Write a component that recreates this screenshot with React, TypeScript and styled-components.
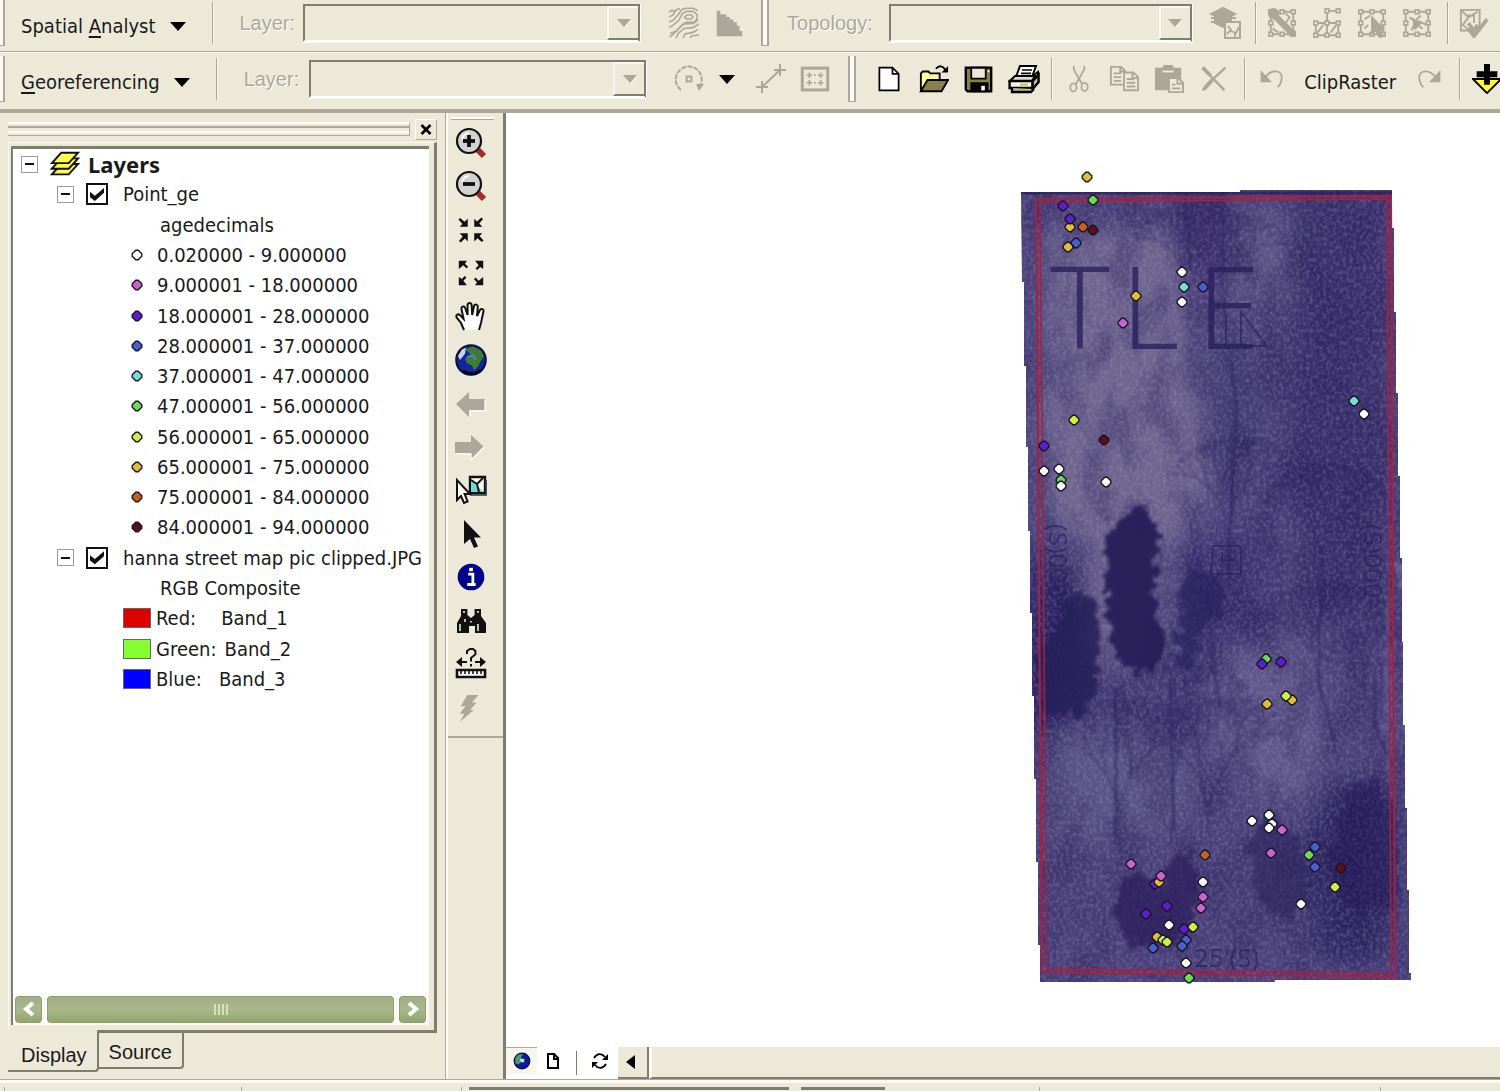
import React from "react";
import styled, { createGlobalStyle, css } from "styled-components";

const face = "#ece9d8";
const shade = "#aca899";
const dark = "#7f7c70";
const light = "#ffffff";
const uiFont = `"DejaVu Sans Condensed", "DejaVu Sans", sans-serif`;
const plainFont = `"Liberation Sans", Arial, sans-serif`;

const GlobalStyle = createGlobalStyle`
  *, *::before, *::after { box-sizing: border-box; }
  body { margin: 0; background: ${face}; }
  button, select, input { font: inherit; color: inherit; margin: 0; }
`;

const Page = styled.div`
  display: flex;
  flex-direction: column;
  height: 100vh;
  overflow: hidden;
  background: ${face};
  color: #1a1a1a;
  font-family: ${uiFont};
  font-size: 20px;
  line-height: 24px;
`;

/* ---------- toolbars ---------- */

const ToolbarRow = styled.div<{ $last?: boolean }>`
  display: flex;
  flex: none;
  align-items: flex-start;
  overflow: hidden;
  height: ${(p) => (p.$last ? 61 : 52)}px;
  padding-top: ${(p) => (p.$last ? 4 : 0)}px;
  border-bottom: ${(p) => (p.$last ? `4px solid ${shade}` : `1px solid ${shade}`)};
  box-shadow: ${(p) => (p.$last ? `inset 0 1px 0 #f8f7ef` : "none")};
`;

const Bar = styled.div`
  display: flex;
  flex: none;
  align-items: center;
  height: 46px;
`;

const Grip = styled.span<{ $edge?: boolean }>`
  flex: none;
  width: ${(p) => (p.$edge ? 8 : 5)}px;
  height: 46px;
  background: #fbfaf4;
  border-right: 2px solid ${shade};
  border-bottom: 1px solid ${shade};
  border-left: ${(p) => (p.$edge ? `2px solid ${shade}` : "none")};
`;

const Separator = styled.span`
  flex: none;
  width: 2px;
  height: 42px;
  border-left: 1px solid ${shade};
  border-right: 1px solid #f8f7ef;
`;

const MenuButton = styled.button`
  display: flex;
  align-items: center;
  gap: 14px;
  height: 46px;
  padding: 6px 0 0 16px;
  border: 0;
  background: none;
  white-space: nowrap;
`;

const Accel = styled.span`
  text-decoration: underline;
  text-decoration-thickness: 2px;
  text-underline-offset: 3px;
`;

const Push = styled.span<{ $w: number }>`
  flex: none;
  width: ${(p) => p.$w}px;
`;

const FieldLabel = styled.label`
  font-family: ${plainFont};
  color: ${shade};
  text-shadow: 1px 1px 0 ${light};
  white-space: nowrap;
`;

const Combo = styled.div<{ $w: number }>`
  display: flex;
  flex: none;
  width: ${(p) => p.$w}px;
  height: 38px;
  border: 2px solid ${dark};
  border-bottom-color: ${light};
  box-shadow: 0 1px 0 ${light}, 1px 0 0 ${light};
`;

const ComboSelect = styled.select`
  flex: 1;
  min-width: 0;
  appearance: none;
  border: 0;
  background: ${face};
  opacity: 1;
`;

const ComboArrow = styled.span`
  display: flex;
  flex: none;
  align-items: center;
  justify-content: center;
  width: 31px;
  border-top: 2px solid #f8f7ef;
  border-left: 2px solid #f8f7ef;
  border-bottom: 2px solid ${dark};
`;

const IconButton = styled.button<{ $w?: number }>`
  display: flex;
  flex: none;
  align-items: center;
  justify-content: center;
  width: ${(p) => p.$w ?? 45}px;
  height: 42px;
  padding: 0;
  border: 0;
  background: none;
`;

const TextButton = styled.button`
  flex: none;
  height: 46px;
  padding: 6px 10px 0;
  border: 0;
  background: none;
`;

/* ---------- work area ---------- */

const Work = styled.div`
  display: flex;
  flex: 1;
  min-height: 0;
`;

const Dock = styled.aside`
  display: flex;
  flex: none;
  flex-direction: column;
  width: 446px;
  padding: 5px 8px 7px 8px;
  border-right: 1px solid ${shade};
`;

const DockHead = styled.div`
  display: flex;
  align-items: center;
  gap: 5px;
  height: 22px;
`;

const DockGrip = styled.div`
  flex: 1;
  height: 14px;
  border-top: 2px solid #fbfaf4;
  border-bottom: 1px solid ${shade};
  border-right: 1px solid ${shade};
  background: linear-gradient(${face} 2px, ${shade} 2px, ${shade} 4px, ${face} 4px, ${face} 7px, #fbfaf4 7px, #fbfaf4 9px, ${face} 9px);
`;

const CloseButton = styled.button`
  display: flex;
  align-items: center;
  justify-content: center;
  width: 22px;
  height: 21px;
  padding: 0;
  background: ${face};
  border: 1px solid ${light};
  border-right-color: ${shade};
  border-bottom-color: ${shade};
`;

const TabPage = styled.div`
  display: flex;
  flex: 1;
  flex-direction: column;
  min-height: 0;
  margin-top: 2px;
  padding: 3px 5px 5px 2px;
  border: 1px solid #fbfaf4;
  border-right: 3px solid ${dark};
  border-bottom: 3px solid ${dark};
`;

const TreeBox = styled.div`
  display: flex;
  flex: 1;
  flex-direction: column;
  min-height: 0;
  background: ${light};
  border-top: 3px solid ${dark};
  border-left: 2px solid ${dark};
`;

const Tree = styled.ul`
  display: grid;
  grid-auto-rows: 1fr;
  height: 545px;
  margin: 0 0 auto;
  padding: 0;
  list-style: none;
`;

const TreeRow = styled.li<{ $level: number }>`
  display: flex;
  align-items: center;
  min-width: 0;
  padding-left: ${(p) => [8, 44, 147, 118, 110][p.$level]}px;
  white-space: pre;
`;

const Expander = styled.button`
  display: flex;
  flex: none;
  align-items: center;
  justify-content: center;
  width: 17px;
  height: 17px;
  padding: 0;
  border: 1px solid #9a9a9a;
  background: ${light};
  &::before {
    content: "";
    width: 9px;
    height: 2px;
    background: #111;
  }
`;

const LayerTick = styled.label`
  display: flex;
  align-items: center;
  gap: 15px;
  margin-left: 12px;
`;

const Tick = styled.input`
  appearance: none;
  display: grid;
  place-items: center;
  width: 22px;
  height: 22px;
  border: 2px solid #111;
  background: ${light};
  &:checked::before {
    content: "";
    width: 14px;
    height: 13px;
    background: #111;
    clip-path: polygon(0 30%, 35% 60%, 100% 0, 100% 38%, 35% 100%, 0 72%);
  }
`;

const FrameName = styled.strong`
  margin-left: 8px;
  font-family: "Noto Sans", sans-serif;
  font-weight: 700;
  font-size: 22px;
`;

const ClassLabel = styled.span`
  margin-left: 14px;
`;

const Swatch = styled.span<{ $color: string }>`
  flex: none;
  width: 28px;
  height: 20px;
  margin-right: 5px;
  border: 1px solid #666;
  background: ${(p) => p.$color};
`;

const BandName = styled.span<{ $gap: number }>`
  margin-left: ${(p) => p.$gap}px;
`;

const ScrollBar = styled.div`
  display: flex;
  flex: none;
  align-items: center;
  gap: 5px;
  height: 32px;
  padding: 0 3px 0 2px;
  background: #fbfaf4;
`;

const olive = css`
  border: 1px solid #8f9f70;
  border-radius: 3px;
  background: linear-gradient(#a1ae86, #a9b88c 50%, #93a76c);
  outline: 1px solid #fff;
`;

const ScrollStep = styled.button`
  display: flex;
  align-items: center;
  justify-content: center;
  width: 27px;
  height: 27px;
  padding: 0;
  ${olive}
`;

const ScrollThumb = styled.div`
  display: flex;
  flex: 1;
  align-items: center;
  justify-content: center;
  gap: 2px;
  height: 27px;
  ${olive}
`;

const ThumbLine = styled.span`
  width: 2px;
  height: 11px;
  background: #d7e0bd;
`;

const Tabs = styled.div`
  display: flex;
  flex: none;
  align-items: flex-start;
  height: 39px;
`;

const Tab = styled.button<{ $active?: boolean }>`
  height: ${(p) => (p.$active ? 42 : 36)}px;
  padding: ${(p) => (p.$active ? "9px 10px 0 13px" : "4px 10px 0")};
  margin-top: ${(p) => (p.$active ? -3 : 0)}px;
  border: 0 solid ${dark};
  border-right-width: 2px;
  border-bottom-width: 2px;
  border-radius: 0 0 4px 0;
  background: ${face};
  font-family: ${plainFont};
  line-height: 24px;
`;

const ToolColumn = styled.div`
  display: flex;
  flex: none;
  flex-direction: column;
  width: 57px;
  border-left: 2px solid #fbfaf4;
`;

const ToolStrip = styled.div`
  display: flex;
  flex-direction: column;
  gap: 2px;
  height: 625px;
  padding: 4px 9px 0 0;
  border-bottom: 2px solid ${shade};
`;

const ToolGrip = styled.span`
  height: 3px;
  margin-left: 3px;
  background: #fbfaf4;
  border-bottom: 1px solid ${shade};
`;

const ToolGrid = styled.div`
  display: grid;
  grid-auto-rows: 1fr;
  justify-items: center;
  height: 608px;
`;

const MapPane = styled.main`
  display: flex;
  flex: 1;
  flex-direction: column;
  min-width: 0;
  background: #fefffe;
  border-left: 3px solid ${dark};
`;

const MapCanvas = styled.svg`
  display: block;
  flex: 1;
  width: 100%;
  min-height: 0;
`;

const MapFoot = styled.div`
  display: flex;
  flex: none;
  height: 32px;
`;

const ViewButton = styled.button<{ $pressed?: boolean }>`
  display: flex;
  align-items: center;
  justify-content: center;
  width: 31px;
  height: 27px;
  padding: 0;
  border: 0;
  border-top: 1px solid ${(p) => (p.$pressed ? shade : "transparent")};
  background: ${(p) => (p.$pressed ? "#f7f5ec" : "none")};
`;

const FootRule = styled.span`
  width: 1px;
  height: 24px;
  margin: 4px 7px 0 8px;
  background: ${dark};
`;

const ScrollLeft = styled.button`
  display: flex;
  align-items: center;
  justify-content: center;
  width: 31px;
  padding: 0 5px 0 0;
  background: ${face};
  border: 0 solid ${dark};
  border-right-width: 2px;
  border-bottom-width: 2px;
`;

const ScrollTrack = styled.div`
  flex: 1;
  background: ${face};
  border-left: 3px solid #fbfaf4;
  border-bottom: 2px solid ${dark};
`;

const Status = styled.footer`
  display: flex;
  flex: none;
  height: 12px;
  padding-top: 7px;
  border-top: 1px solid ${shade};
  box-shadow: inset 0 3px 0 #fbfaf4;
`;

const StatusCell = styled.span<{ $w: number; $sunk?: boolean }>`
  flex: none;
  width: ${(p) => p.$w}px;
  margin-right: ${(p) => (p.$sunk ? 12 : 0)}px;
  border-top: ${(p) => (p.$sunk ? `3px solid ${dark}` : "none")};
  border-right: ${(p) => (p.$sunk ? "none" : `1px solid ${shade}`)};
`;

/* ---------- icons ---------- */

type IconProps = { children: React.ReactNode; size?: number; color?: string };

const Icon = ({ children, size = 30, color = shade }: IconProps) => (
  <svg width={size} height={size} viewBox="0 0 16 16" fill="none" stroke={color} strokeWidth="1" aria-hidden="true">
    {children}
  </svg>
);

const Caret = ({ color = "#000" }: { color?: string }) => (
  <svg width="16" height="9" viewBox="0 0 16 9" aria-hidden="true">
    <path d="M0 0h16L8 9z" fill={color} />
  </svg>
);

const SmallCaret = () => (
  <svg width="14" height="8" viewBox="0 0 14 8" aria-hidden="true">
    <path d="M0 0h14L7 8z" fill={shade} />
    <path d="M8 8L14 1" stroke="#fff" />
  </svg>
);

const ContourIcon = () => (
  <Icon size={32}>
    <g strokeWidth=".8">
      <path d="M.5 2.500l1.500-.8 1.500.6M.5 5l2-1 1.500-2.500 2-.8M.5 7.500l2-.8L5 4l2-2.800 2-.6h3.500l2.500 1.200" />
      <path d="M.5 10.200l2-1 3-2.700 1.500-3 2-1.300h3.500l2 1.500v2.500l-1.500 1.500H9l-2 1.200-2.500 3-3.500 1.300" />
      <path d="M8.300 5l1.200-1h2.200l.8 1-.8 1H9.300zM.8 15l2-1.500 2.700-3 2.500-2 4.500-.3 2.500-1.700M4 15.500l1.300-2.500L8 10.700l4.500-.4 3-1.800M7.500 15.500l1-2 4-.8 2.500-1.500M11 15.500l.8-1 3.700-.5" />
    </g>
  </Icon>
);

const HistogramIcon = () => (
  <Icon size={28}>
    <path d="M1 1v14.500h14.500v-3h-1.500v-3h-1.500V7.500h-2V6h-2V4.500h-2V3H3V1z" fill={shade} stroke="none" />
  </Icon>
);

const TopoLayersIcon = () => (
  <Icon size={32}>
    <path d="M7 .5L1 3.500l6 3 6-3z" fill={shade} />
    <path d="M1 5.500h2M1 7.500h3M11 5.500h2.500M3 4h8v5l-4 1-4-2z" fill={shade} />
    <path d="M8 7.500h7.500V15.500H8z" fill={face} />
    <path d="M9 13.500l2-2-1.500-2M11 12l2.500 1 1.500-3M13 15v-2" strokeWidth=".9" />
  </Icon>
);

const nodes = (pts: number[][]) =>
  pts.map(([x, y]) => <rect key={`${x}-${y}`} x={x - 1} y={y - 1} width="2" height="2" fill={face} strokeWidth=".9" />);

const gridNodes = [[2, 2], [8, 2], [14, 2], [2, 8], [14, 8], [2, 14], [8, 14], [14, 14]];

const TopoEditIcon = () => (
  <Icon>
    <path d="M2 2h12v12H2zM10 3l2 2-2 3M3 11l3 2" />
    {nodes(gridNodes)}
    <circle cx="3.500" cy="3" r="2.500" fill={shade} />
    <path d="M4 4l9 9" strokeWidth="3.500" />
    <circle cx="13.500" cy="13.500" r="1.500" fill={shade} />
  </Icon>
);

const SharedFeatureIcon = () => (
  <Icon>
    <path d="M8 1.500h6M8 1.500V8M2 8h12v6.500H2zM8 8v6M3 13l3-4M10 13l3-4" />
    {nodes([[8, 1.500], [14, 1.500], [2, 8], [8, 8], [14, 8], [2, 14.500], [8, 14.500], [14, 14.500]])}
  </Icon>
);

const ValidateExtentIcon = () => (
  <Icon>
    <path d="M2 2h12v12H2zM4 6l3-2M4 11l2-2" />
    {nodes(gridNodes)}
    <path d="M8 5l6 6-2 .5 2 3.500-2 .5-2-3.500-2 1.500z" fill={shade} />
  </Icon>
);

const ValidateAllIcon = () => (
  <Icon>
    <path d="M2 2h12v12H2zM4 5l3 2 3-3M5 12l2-4 4 3M9 7l4 2" />
    {nodes(gridNodes)}
    <path d="M6 6l4 2-3 3z" fill={shade} />
  </Icon>
);

const ErrorInspectorIcon = () => (
  <Icon>
    <path d="M1 1h10v11H1zM1 1l4 4-3 4 5 4M5 5l5-3M4 4h4v4" />
    <path d="M5 11l3 4 7-9M5 8l3 4 2-3" strokeWidth="2" />
  </Icon>
);

const RotateIcon = () => (
  <Icon size={32}>
    <path d="M4 13.500A6.500 6.500 0 1 1 13.500 11.500" strokeDasharray="2.500 .6" />
    <path d="M11.500 10.500h4L13 14z" fill={shade} stroke="none" />
    <rect x="6.800" y="6.800" width="2.400" height="2.400" />
  </Icon>
);

const ControlPointIcon = () => (
  <Icon size={32}>
    <path d="M1 12h6M4 9v6M10 3.500h6M13 .5v6M4 12l9-8.500" />
  </Icon>
);

const LinkTableIcon = () => (
  <Icon size={30}>
    <rect x="1.200" y="2.200" width="13.600" height="11.600" strokeWidth="1.600" />
    <path d="M3.500 6h3M5 4.500v3M9.500 6h3M11 4.500v3M3.500 10h3M5 8.500v3M9.500 10h3M11 8.500v3M7.500 6h1M7.500 10h1" strokeWidth=".9" />
  </Icon>
);

const NewIcon = () => (
  <Icon color="#000" size={28}>
    <path d="M2.500 1.500h7.500l3.500 3.500v9.500h-11z" fill="#fff" strokeWidth="1" />
    <path d="M10 1.500v3.500h3.500" strokeWidth="1" />
  </Icon>
);

const OpenIcon = () => (
  <Icon color="#000">
    <path d="M1 14V5l1-1h3l1 1h5v3" fill="#ffff9c" />
    <path d="M1 14.500L4.500 8.500h11L12 14.500z" fill="#84824a" />
    <path d="M9 2.500C11 .5 12.500 1 14 3" />
    <path d="M15.500 1v3.500H12z" fill="#000" stroke="none" />
  </Icon>
);

const SaveIcon = () => (
  <Icon color="#000" size={29}>
    <path d="M1 1.500h14v13H2l-1-1z" fill="#84824a" strokeWidth="1.300" />
    <path d="M4 1.500h8v6H4z" fill={face} />
    <path d="M4 10h9v4.500H4z" fill="#000" />
    <path d="M9.500 11.500h2v2.500h-2z" fill="#fff" stroke="none" />
    <path d="M13 3.500h1" stroke="#fff" />
  </Icon>
);

const PrintIcon = () => (
  <Icon color="#000" size={32}>
    <path d="M4 7l2-5.500h8L12 7z" fill="#fff" />
    <path d="M7 3.500h5M6.500 5.200h5" strokeWidth=".8" />
    <path d="M1 9l2.500-2.500h10L12 9z" fill="#dcdccb" />
    <path d="M.8 9h11.500v3.500H.8z" fill="#f4f4e0" strokeWidth="1.200" />
    <path d="M12.300 9l3-3v3.500l-3 3.500zM2 12.500v2h9.500l1.500-1.500" fill="#bdbb96" strokeWidth="1.200" />
    <path d="M6 10.800h4" stroke="#c6c34c" />
    <path d="M13 6l2-1.500v2" />
  </Icon>
);

const CutIcon = () => (
  <Icon size={28}>
    <path d="M5 .5v2l3 5.500 3-5.500v-2M8 8l-2 3M8 8l2 3" />
    <ellipse cx="4.800" cy="12.800" rx="1.800" ry="2.300" />
    <ellipse cx="11.200" cy="12.500" rx="1.800" ry="2.300" />
  </Icon>
);

const CopyIcon = () => (
  <Icon>
    <path d="M1 1.500h5.500l2 2v7.500H1zM6 1.500v2.500h2.500M2.500 5h4M2.500 7h4M2.500 9h4" />
    <path d="M8 4.500h5l2.500 2.500v7H8z" fill={face} />
    <path d="M12.500 4.500v3h3M9.500 8h4M9.500 10h4.500M9.500 12h4.500" />
  </Icon>
);

const PasteIcon = () => (
  <Icon>
    <path d="M1 2.500h3.500l1-1.500h4l1 1.500H14V13.500H1z" fill={shade} />
    <path d="M4.500 4h6" stroke={face} />
    <path d="M8 7.500h5l2.500 2.500v5H8z" fill={face} />
    <path d="M12.500 8v2.500h3M9.500 11h2M9.500 13h4.500" />
  </Icon>
);

const DeleteIcon = () => (
  <Icon size={28}>
    <path d="M1.500 1.500L14 14.500M14.500 1.500L7 8.500 1.500 14.500" strokeWidth="1.300" />
    <path d="M1.500 1.500l4.500 4.500M7 8.500l-4.500 5" strokeWidth="2.200" />
  </Icon>
);

const UndoIcon = () => (
  <Icon size={26}>
    <path d="M4 7c3-5 10-5 10 0 0 2-.5 4-2.500 6" strokeWidth="1.100" />
    <path d="M1 2.500v7.500h7z" fill={shade} stroke="none" />
  </Icon>
);

const RedoIcon = () => (
  <Icon size={26}>
    <path d="M12 7C9 2 2 2 2 7c0 2 .5 4 2.500 6" strokeWidth="1.100" />
    <path d="M15 2.500v7.500H8z" fill={shade} stroke="none" />
  </Icon>
);

const AddDataIcon = () => (
  <Icon color="#000">
    <path d="M.5 8h15L8 15.500z" fill="#ffff31" />
    <path d="M8 0v11M2.500 5.500h11" strokeWidth="3.200" />
  </Icon>
);

const ZoomIcon = ({ plus }: { plus?: boolean }) => (
  <Icon color="#111" size={32}>
    <path d="M11.500 11.500l3 3" stroke="#a52a2a" strokeWidth="3" />
    <circle cx="7" cy="7" r="6" fill="#d2d2d2" strokeWidth="1.100" />
    <path d="M3.500 6a4 4 0 0 1 3.500-3" stroke="#fff" />
    <path d="M4 7h6" strokeWidth="1.900" />
    {plus && <path d="M7 4v6" strokeWidth="1.900" />}
  </Icon>
);

const FixedZoomIcon = ({ out }: { out?: boolean }) => (
  <Icon color="#111" size={26}>
    {[0, 90, 180, 270].map((a) => (
      <g key={a} transform={`rotate(${a} 8 8)`}>
        {out ? (
          <path d="M.5.5h5L4.300 2.300 6.200 4.200l-1 1L3.300 3.300.5 5.500z" fill="#111" stroke="none" />
        ) : (
          <path d="M6 6H1l1.700-1.700L.3 1.600l1-1 2.700 2.300L6 1z" fill="#111" stroke="none" />
        )}
      </g>
    ))}
  </Icon>
);

const HandIcon = () => (
  <Icon color="#111" size={32}>
    <path
      d="M4.500 14.500L3 11 .8 8.200c-.5-1.400.9-2 1.800-1L4.300 9 3.200 3.800c0-1.300 1.500-1.500 1.900-.3L6.300 7V2c.2-1.300 1.800-1.300 2 0l.3 5 .9-4.500c.5-1.200 1.900-.8 1.900.4L11 7.500l1.500-3c.8-1 2-.4 1.700.8L13 11l-1 3.500"
      fill="#fff"
    />
  </Icon>
);

const GlobeIcon = () => (
  <Icon color="#101034" size={32}>
    <circle cx="8" cy="8" r="7.400" fill="#15249c" />
    <path d="M5 2.500l4-1.200 4 2 1.500 3-1.500 2-1.500 3-2 2-1-2.500-2.500-1L5 7l3-1-1-1.500z" fill="#3f7b33" stroke="none" />
    <path d="M1.500 6l2-3.300 2-.8-.5 3L2.500 8z" fill="#c8d6e4" stroke="none" />
    <path d="M6 6.500l3-.7 1.500 2" stroke="#4a86c8" />
    <path d="M4 13.500a7 7 0 0 0 9-.5" stroke="#050522" strokeWidth="1.500" />
  </Icon>
);

const SmallGlobeIcon = () => (
  <Icon color="#0a0a50" size={18}>
    <circle cx="8" cy="8" r="7" fill="#10189a" />
    <path d="M2 10V5l3-3h4L7 5l1 3-3 3z" fill="#4c9a5c" stroke="none" />
    <path d="M6 6h4v3H7z" fill="#b8dcf4" stroke="none" />
  </Icon>
);

const ArrowIcon = ({ right }: { right?: boolean }) => (
  <Icon size={32}>
    <g transform={right ? "matrix(-1 0 0 1 15 0)" : undefined}>
      <path d="M.5 8l6.500-6v3.500h8v5.500H7v3.500z" fill={shade} stroke="none" />
    </g>
    <path d={right ? "M1 11.500h7v3L14.500 8" : "M7.500 14v-2.500H15V6"} stroke="#fff" strokeWidth=".6" />
  </Icon>
);

const SelectFeaturesIcon = () => (
  <Icon color="#111" size={32}>
    <path d="M7.500 1.500h7.500v8H7.500z" fill="#fff" strokeWidth="1.200" />
    <path d="M8 2l6 7H8z" fill="#6fd8d0" stroke="none" />
    <path d="M8 3l3 2 1 4M11 5l3-3" />
    <path d="M1 3v10l2-2 1.500 3.500 1.800-.8L4.800 10H7.500z" fill="#fff" />
    <path d="M7.500 10.500h8V3" stroke="#334" strokeWidth=".8" />
  </Icon>
);

const PointerIcon = () => (
  <Icon color="#111" size={32}>
    <path d="M4.500 1v12l3-2.500 2 4.500 2-.8-2-4.400H13z" fill="#111" stroke="none" />
  </Icon>
);

const InfoIcon = () => (
  <Icon color="#00008c" size={30}>
    <circle cx="8" cy="8" r="6.600" fill="#00008c" />
    <path d="M6.500 6.500h2.500V11.500M6 12h4.500" stroke="#fff" strokeWidth="1.500" />
    <path d="M7 4h2" stroke="#fff" strokeWidth="1.800" />
  </Icon>
);

const BinocularsIcon = () => (
  <Icon color="#111" size={32}>
    <path d="M1 14V9l2-3.500V2h3.200v3L8 6.500 9.800 5V2H13v3.500L15.500 9v5H10v-3.500H7V14z" fill="#111" stroke="none" />
    <path d="M4.500 3v1M11.500 3v1M2.500 9.500V13M11.500 9.500V13M5 7v1.500M8 8v.8" stroke={face} strokeWidth=".8" />
  </Icon>
);

const MeasureIcon = () => (
  <Icon color="#111" size={32}>
    <path d="M1 7h5M10 7h5" />
    <path d="M.5 7l3-2.500v5zM15.500 7l-3-2.500v5z" fill="#111" stroke="none" />
    <path d="M6 3V1.500l1.500-1h1.500l1.200 1v1.700L8 5v1.800M8 8v1.200" />
    <path d="M1 11h14v3.500H1z" fill="#fff" strokeWidth="1.300" />
    <path d="M3 11.500v1.500M5 11.500v1.500M7 11.500v1.500M9 11.500v1.500M11 11.500v1.500M13 11.500v1.500" strokeWidth=".8" />
  </Icon>
);

const BoltIcon = () => (
  <Icon size={30}>
    <path d="M6 1h6L8.500 5H11L7.500 9h2L2 15.500 4.500 11H2l3-4H2.500z" fill={shade} stroke="none" />
  </Icon>
);

const LayersIcon = () => (
  <Icon color="#111">
    {[10.500, 7.500, 4.500].map((y) => (
      <path key={y} d={`M1 ${y + 3}h9L15 ${y - 2.500}H6z`} fill="#ffff4a" />
    ))}
  </Icon>
);

const CloseIcon = () => (
  <svg width="13" height="11" viewBox="0 0 13 11" aria-hidden="true">
    <path d="M1.500 1l9 9M10.500 1l-9 9" stroke="#000" strokeWidth="2.600" />
  </svg>
);

const Chevron = ({ right }: { right?: boolean }) => (
  <svg width="14" height="16" viewBox="0 0 14 16" aria-hidden="true">
    <path d={right ? "M3 2l7 6-7 6" : "M11 2L4 8l7 6"} fill="none" stroke="#fff" strokeWidth="4" />
  </svg>
);

const PageIcon = () => (
  <svg width="14" height="18" viewBox="0 0 14 18" aria-hidden="true">
    <path d="M2 2h6l4 4v10H2zM8 2v5h4" fill="#fff" stroke="#000" strokeWidth="2" />
  </svg>
);

const RefreshIcon = () => (
  <svg width="18" height="18" viewBox="0 0 18 18" aria-hidden="true">
    <path d="M3 6c3-5 8-5 11-1M15 12c-3 5-8 5-11 1" fill="none" stroke="#000" strokeWidth="1.800" />
    <path d="M17 2v6h-6zM1 16v-6h6z" />
  </svg>
);

/* ---------- map ---------- */

const classes: [string, string][] = [
  ["#ffffff", "0.020000 - 9.000000"],
  ["#c964cf", "9.000001 - 18.000000"],
  ["#5a1fd0", "18.000001 - 28.000000"],
  ["#4660cf", "28.000001 - 37.000000"],
  ["#6fe3cf", "37.000001 - 47.000000"],
  ["#6bdc55", "47.000001 - 56.000000"],
  ["#cdf03c", "56.000001 - 65.000000"],
  ["#e0c030", "65.000001 - 75.000000"],
  ["#c2631f", "75.000001 - 84.000000"],
  ["#5c0f18", "84.000001 - 94.000000"],
];

// x, y, class index
const points: number[][] = [
  [1087, 177, 7], [1093, 200, 5], [1063, 206, 2], [1070, 227, 7], [1070, 219, 2], [1083, 227, 8], [1093, 230, 9],
  [1076, 243, 3], [1068, 247, 7], [1182, 272, 0], [1184, 287, 4], [1203, 287, 3], [1182, 302, 0], [1136, 296, 7],
  [1123, 323, 1], [1074, 420, 6], [1104, 440, 9], [1044, 446, 2], [1044, 471, 0], [1059, 469, 0], [1061, 480, 5],
  [1061, 486, 0], [1106, 482, 0], [1354, 401, 4], [1364, 414, 0], [1266, 659, 5], [1262, 664, 2], [1281, 662, 2],
  [1267, 704, 7], [1292, 700, 7], [1286, 696, 6], [1252, 821, 0], [1269, 815, 0], [1272, 824, 0], [1269, 828, 0],
  [1282, 830, 1], [1271, 853, 1], [1315, 847, 3], [1309, 855, 5], [1315, 867, 3], [1341, 868, 9], [1335, 887, 6],
  [1301, 904, 0], [1205, 855, 8], [1131, 864, 1], [1155, 884, 2], [1159, 882, 7], [1161, 876, 1], [1203, 882, 0],
  [1203, 897, 1], [1201, 908, 1], [1167, 906, 2], [1146, 914, 2], [1169, 925, 0], [1184, 929, 2], [1193, 927, 6],
  [1157, 937, 7], [1163, 940, 6], [1167, 942, 6], [1153, 948, 3], [1186, 940, 3], [1182, 946, 3], [1186, 963, 0],
  [1189, 978, 5],
];

const Marker = ({ x, y, fill }: { x: number; y: number; fill: string }) => (
  <path
    transform={`translate(${x} ${y})`}
    d="M-1.200-4.800h2.400l3.600 3.600v2.400l-3.600 3.600h-2.400l-3.600-3.600v-2.400z"
    fill={fill}
    stroke="#1c1426"
    strokeWidth="1.400"
  />
);

// Bare winter trees: every trunk splits into ever thinner, slightly uneven branches.
const branches = (x: number, y: number, angle: number, length: number, depth: number, seed: number): string => {
  const x2 = x + Math.cos(angle) * length;
  const y2 = y + Math.sin(angle) * length;
  const line = `M${x.toFixed(1)} ${y.toFixed(1)}L${x2.toFixed(1)} ${y2.toFixed(1)}`;
  if (depth === 0) return line;
  const left = 0.15 + 0.25 * Math.abs(Math.sin(seed * 12.9));
  const right = 0.15 + 0.25 * Math.abs(Math.cos(seed * 7.7));
  return (
    line +
    branches(x2, y2, angle - left, length * 0.74, depth - 1, seed + 1.3) +
    branches(x2, y2, angle + right, length * 0.78, depth - 1, seed + 2.7)
  );
};

const up = -Math.PI / 2;
const trees: number[][] = [
  [1228, 570, 38, 1], [1322, 590, 36, 3], [1120, 850, 44, 5], [1172, 830, 48, 8], [1208, 850, 44, 2],
  [1190, 320, 34, 4], [1224, 330, 34, 9], [1374, 750, 36, 6], [1320, 720, 40, 11],
];

const outline =
  "1021,192 1240,192 1240,190 1392,190 1392,228 1394,228 1394,312 1396,312 1396,393 1398,393 1398,476 1400,476 1400,558 1402,558 1402,642 1403,642 1403,725 1405,725 1405,808 1407,808 1407,890 1409,890 1409,973 1411,973 1411,980 1275,980 1275,982 1040,982 1040,945 1038,945 1038,862 1036,862 1036,779 1034,779 1034,696 1032,696 1032,613 1030,613 1030,531 1028,531 1028,447 1026,447 1026,366 1024,366 1024,282 1022,282";

const MapImage = () => (
  <g>
    <defs>
      <clipPath id="sheet"><polygon points={outline} /></clipPath>
      <filter id="soft"><feGaussianBlur stdDeviation="13" /></filter>
      <filter id="fuzzy" filterUnits="userSpaceOnUse" x="1010" y="180" width="410" height="810">
        <feGaussianBlur stdDeviation=".8" />
      </filter>
      <filter id="rough" filterUnits="userSpaceOnUse" x="1010" y="180" width="410" height="810">
        <feTurbulence type="fractalNoise" baseFrequency=".09" numOctaves="3" seed="4" result="n" />
        <feDisplacementMap in="SourceGraphic" in2="n" scale="24" xChannelSelector="R" yChannelSelector="G" />
        <feGaussianBlur stdDeviation="1.500" />
      </filter>
      <filter id="grain" x="0" y="0" width="100%" height="100%" colorInterpolationFilters="sRGB">
        <feTurbulence type="fractalNoise" baseFrequency=".3 .24" numOctaves="3" seed="8" />
        <feColorMatrix values="0 0 0 0 .66  0 0 0 0 .64  0 0 0 0 .76  1.400 0 0 0 -.55" />
      </filter>
      <filter id="mottle" x="0" y="0" width="100%" height="100%" colorInterpolationFilters="sRGB">
        <feTurbulence type="fractalNoise" baseFrequency=".035 .02" numOctaves="4" seed="21" />
        <feColorMatrix values="0 0 0 0 .16  0 0 0 0 .12  0 0 0 0 .36  3.400 0 0 0 -1.400" />
      </filter>
    </defs>
    <g clipPath="url(#sheet)">
      <rect x="1015" y="185" width="400" height="800" fill="#4a417c" />
      <g filter="url(#soft)">
        <path d="M1045 230h130l20 150 15 110-40 60-20 110h-60V540l-50-20z" fill="#6d658f" />
        <path d="M1230 210h50l10 90h-60z" fill="#5f5787" />
        <path d="M1225 640h90l15 130-60 50-60-80z" fill="#5e568c" />
        <path d="M1060 730h60l80 40-30 60-110 10z" fill="#5a5286" />
        <path d="M1295 190h90v420l-70 20-30-200z" fill="#382e6c" />
        <path d="M1330 780h60v180h-70l-20-100z" fill="#2e2564" />
        <path d="M1030 570h50l10 110-40 60h-30z" fill="#2c2363" />
        <path d="M1175 190h60l10 90h-60z" fill="#3c3371" />
        <path d="M1180 540h90v110h-80z" fill="#3c3372" />
        <path d="M1200 340h50v130h-40z" fill="#453c77" />
      </g>
      <rect x="1015" y="185" width="400" height="800" filter="url(#mottle)" opacity=".32" />
      <rect x="1015" y="185" width="400" height="800" filter="url(#grain)" opacity=".5" />
      <g fill="#261d59" filter="url(#rough)">
        <path d="M1124 512l20-6 14 24-4 60 10 60-6 14-18 10-26-16-8-70-2-50z" opacity=".95" />
        <path d="M1068 600l22-6 10 40-2 50-12 32-42-2-6-56z" opacity=".85" />
        <path d="M1184 576l16-10 24 14 4 34-24 8-12 48-18-6z" opacity=".65" />
        <path d="M1120 880l24-8 14 20 14-40 14 0 14 40-16 50-50 8-22-34z" opacity=".7" />
        <path d="M1250 840l24-30 26 30 10 60-24 20-30-20z" opacity=".55" />
        <path d="M1346 790l30-14 18 40 4 90-50 6-20-50z" opacity=".45" />
      </g>
      <g fill="none" stroke="#231955" strokeWidth="1.200" opacity=".38" filter="url(#fuzzy)">
        {trees.map(([x, y, len, seed]) => (
          <path key={seed} d={branches(x, y, up, len, 6, seed)} />
        ))}
      </g>
      <g fill="none" stroke="#2b2260" strokeWidth="3" opacity=".5" filter="url(#fuzzy)">
        <path d="M1232 365l4 40-8 185M1170 680l4 150M1116 690v150M1208 590l4 60 8 60M1322 560l-4 120 16 60M1186 190l4 80M1222 190l2 90M1374 680l2 50 14 30" />
      </g>
      <g fill="none" filter="url(#rough)">
        <path d="M1386 590l4 190" stroke="#6f689c" strokeWidth="5" opacity=".5" />
        <path d="M1402 560v30M1406 650l3 80M1410 790v30" stroke="#8880a8" strokeWidth="6" opacity=".5" />
      </g>
      <g fill="#2a215c" fontFamily={`"Open Sans", sans-serif`}>
        <g fontSize="114" fontWeight="300" opacity=".8">
          <text x="1050" y="349">T</text>
          <text x="1121" y="349">L</text>
          <text x="1197" y="349">E</text>
        </g>
        <g fontSize="26" opacity=".65">
          <text x="1194" y="967">25'(S)</text>
          <text transform="translate(1049 524) rotate(90)">(S)000</text>
          <text transform="translate(1364 524) rotate(90)">(S)000</text>
        </g>
      </g>
      <path d="M1213 546h28v28h-30zM1222 552v18M1222 560h14M1241 312l26 34h-26zM1226 314v32" fill="none" stroke="#2a215c" strokeWidth="2" opacity=".6" />
      <path d="M1021 193h371" stroke="#2a1c52" strokeWidth="3" opacity=".7" fill="none" />
    </g>
    <g fill="none" stroke="#a8213f" strokeWidth="2">
      <path d="M1036 199L1391 196 1395 977 1042 972z" />
      <path d="M1040 202L1387 199 1391 973 1047 969z" strokeWidth="1.500" />
    </g>
  </g>
);

const tools: [string, React.ReactNode][] = [
  ["Zoom In", <ZoomIcon plus />],
  ["Zoom Out", <ZoomIcon />],
  ["Fixed Zoom In", <FixedZoomIcon />],
  ["Fixed Zoom Out", <FixedZoomIcon out />],
  ["Pan", <HandIcon />],
  ["Full Extent", <GlobeIcon />],
  ["Back", <ArrowIcon />],
  ["Forward", <ArrowIcon right />],
  ["Select Features", <SelectFeaturesIcon />],
  ["Select Elements", <PointerIcon />],
  ["Identify", <InfoIcon />],
  ["Find", <BinocularsIcon />],
  ["Measure", <MeasureIcon />],
  ["Hyperlink", <BoltIcon />],
];

const Tool = ({ name, w, off, children }: { name: string; w?: number; off?: boolean; children: React.ReactNode }) => (
  <IconButton type="button" aria-label={name} $w={w} disabled={off}>
    {children}
  </IconButton>
);

const ComboBox = ({ id, w }: { id: string; w: number }) => (
  <Combo $w={w}>
    <ComboSelect id={id} disabled />
    <ComboArrow><SmallCaret /></ComboArrow>
  </Combo>
);

const CheckedLayer = ({ id, name }: { id: string; name: string }) => (
  <TreeRow $level={1}>
    <Expander type="button" aria-label={`Collapse ${name}`} />
    <LayerTick htmlFor={id}>
      <Tick id={id} type="checkbox" defaultChecked />
      {name}
    </LayerTick>
  </TreeRow>
);

const bands: [string, string, string, number][] = [
  ["#de0000", "Red:", "Band_1", 25],
  ["#84ff31", "Green:", "Band_2", 8],
  ["#0000ff", "Blue:", "Band_3", 17],
];

export default function App() {
  return (
    <Page>
      <GlobalStyle />
      <ToolbarRow>
        <Bar>
          <Grip />
          <MenuButton type="button"><span>Spatial <Accel>A</Accel>nalyst</span><Caret /></MenuButton>
          <Push $w={26} />
          <Separator />
          <Push $w={26} />
          <FieldLabel htmlFor="analyst-layer">Layer:</FieldLabel>
          <Push $w={8} />
          <ComboBox id="analyst-layer" w={337} />
          <Push $w={21} />
          <Tool name="Contours" off><ContourIcon /></Tool>
          <Tool name="Histogram" off><HistogramIcon /></Tool>
          <Push $w={10} />
        </Bar>
        <Bar>
          <Grip $edge />
          <Push $w={18} />
          <FieldLabel htmlFor="topology">Topology:</FieldLabel>
          <Push $w={16} />
          <ComboBox id="topology" w={303} />
          <Push $w={11} />
          <Tool name="Map Topology" off><TopoLayersIcon /></Tool>
          <Push $w={7} />
          <Separator />
          <Push $w={3} />
          <Tool name="Topology Edit" off><TopoEditIcon /></Tool>
          <Tool name="Shared Features" off><SharedFeatureIcon /></Tool>
          <Tool name="Validate Extent" off><ValidateExtentIcon /></Tool>
          <Tool name="Validate All" off><ValidateAllIcon /></Tool>
          <Push $w={7} />
          <Separator />
          <Push $w={3} />
          <Tool name="Error Inspector" off><ErrorInspectorIcon /></Tool>
        </Bar>
      </ToolbarRow>
      <ToolbarRow $last>
        <Bar>
          <Grip />
          <MenuButton type="button"><span><Accel>G</Accel>eoreferencing</span><Caret /></MenuButton>
          <Push $w={26} />
          <Separator />
          <Push $w={26} />
          <FieldLabel htmlFor="georef-layer">Layer:</FieldLabel>
          <Push $w={10} />
          <ComboBox id="georef-layer" w={337} />
          <Push $w={20} />
          <Tool name="Rotate" off><RotateIcon /></Tool>
          <Tool name="Rotate options" w={32}><Caret /></Tool>
          <Push $w={4} />
          <Tool name="Add Control Points" off><ControlPointIcon /></Tool>
          <Tool name="View Link Table" off><LinkTableIcon /></Tool>
          <Push $w={11} />
        </Bar>
        <Bar>
          <Grip $edge />
          <Push $w={10} />
          <Tool name="New"><NewIcon /></Tool>
          <Tool name="Open"><OpenIcon /></Tool>
          <Tool name="Save"><SaveIcon /></Tool>
          <Tool name="Print"><PrintIcon /></Tool>
          <Push $w={5} />
          <Separator />
          <Push $w={3} />
          <Tool name="Cut" off><CutIcon /></Tool>
          <Tool name="Copy" off><CopyIcon /></Tool>
          <Tool name="Paste" off><PasteIcon /></Tool>
          <Tool name="Delete" off><DeleteIcon /></Tool>
          <Push $w={8} />
          <Separator />
          <Push $w={3} />
          <Tool name="Undo" off><UndoIcon /></Tool>
          <TextButton type="button">ClipRaster</TextButton>
          <Tool name="Redo" off><RedoIcon /></Tool>
          <Push $w={8} />
          <Separator />
          <Push $w={3} />
          <Tool name="Add Data"><AddDataIcon /></Tool>
        </Bar>
      </ToolbarRow>

      <Work>
        <Dock>
          <DockHead>
            <DockGrip />
            <CloseButton type="button" aria-label="Close"><CloseIcon /></CloseButton>
          </DockHead>
          <TabPage>
            <TreeBox>
              <Tree>
                <TreeRow $level={0}>
                  <Expander type="button" aria-label="Collapse Layers" />
                  <Push $w={12} />
                  <LayersIcon />
                  <FrameName>Layers</FrameName>
                </TreeRow>
                <CheckedLayer id="layer-points" name="Point_ge" />
                <TreeRow $level={2}>agedecimals</TreeRow>
                {classes.map(([color, label]) => (
                  <TreeRow $level={3} key={label}>
                    <svg width="12" height="12" viewBox="-6 -6 12 12" aria-hidden="true">
                      <Marker x={0} y={0} fill={color} />
                    </svg>
                    <ClassLabel>{label}</ClassLabel>
                  </TreeRow>
                ))}
                <CheckedLayer id="layer-image" name="hanna street map pic clipped.JPG" />
                <TreeRow $level={2}>RGB Composite</TreeRow>
                {bands.map(([color, channel, band, gap]) => (
                  <TreeRow $level={4} key={band}>
                    <Swatch $color={color} />
                    {channel}
                    <BandName $gap={gap}>{band}</BandName>
                  </TreeRow>
                ))}
              </Tree>
              <ScrollBar>
                <ScrollStep type="button" aria-label="Scroll left"><Chevron /></ScrollStep>
                <ScrollThumb><ThumbLine /><ThumbLine /><ThumbLine /><ThumbLine /></ScrollThumb>
                <ScrollStep type="button" aria-label="Scroll right"><Chevron right /></ScrollStep>
              </ScrollBar>
            </TreeBox>
          </TabPage>
          <Tabs>
            <Tab type="button" $active>Display</Tab>
            <Tab type="button">Source</Tab>
          </Tabs>
        </Dock>

        <ToolColumn>
          <ToolStrip>
            <ToolGrip />
            <ToolGrid>
              {tools.map(([name, icon]) => (
                <Tool key={name} name={name}>{icon}</Tool>
              ))}
            </ToolGrid>
          </ToolStrip>
        </ToolColumn>

        <MapPane>
          <MapCanvas role="img" aria-label="Map of sample points over the street map image">
            <g transform="translate(-506 -113)">
              <MapImage />
              {points.map(([x, y, c], i) => (
                <Marker key={i} x={x} y={y} fill={classes[c][0]} />
              ))}
            </g>
          </MapCanvas>
          <MapFoot>
            <ViewButton type="button" aria-label="Data View" $pressed><SmallGlobeIcon /></ViewButton>
            <ViewButton type="button" aria-label="Layout View"><PageIcon /></ViewButton>
            <FootRule />
            <ViewButton type="button" aria-label="Refresh View"><RefreshIcon /></ViewButton>
            <Push $w={3} />
            <ScrollLeft type="button" aria-label="Scroll map left">
              <svg width="9" height="14" viewBox="0 0 9 14" aria-hidden="true"><path d="M9 0v14L0 7z" /></svg>
            </ScrollLeft>
            <ScrollTrack />
          </MapFoot>
        </MapPane>
      </Work>

      <Status>
        <StatusCell $w={5} />
        <StatusCell $w={237} />
        <StatusCell $w={220} />
        <Push $w={7} />
        <StatusCell $w={320} $sunk />
        <StatusCell $w={84} $sunk />
        <StatusCell $w={143} />
        <StatusCell $w={341} />
      </Status>
    </Page>
  );
}
